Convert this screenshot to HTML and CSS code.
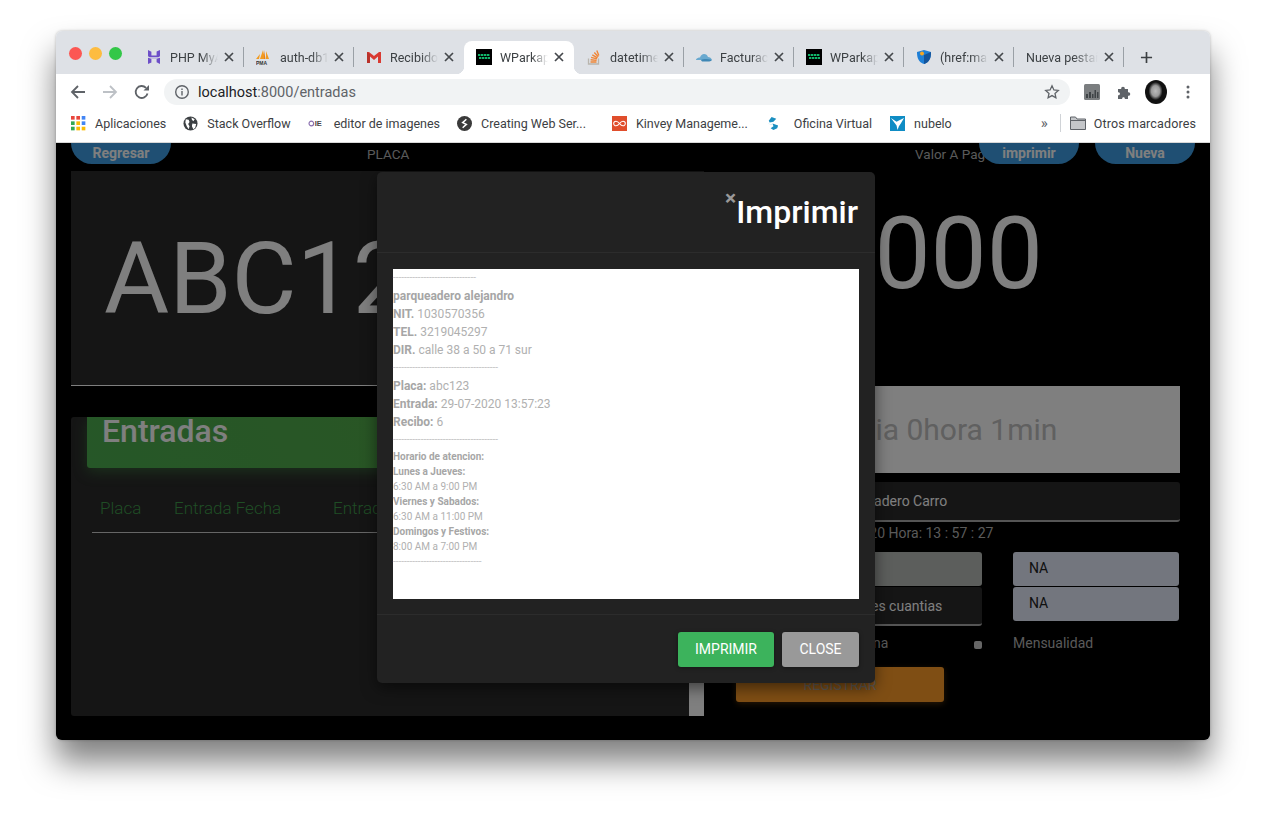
FILE: index.html
```html
<!DOCTYPE html>
<html lang="es">
<head>
<meta charset="utf-8">
<title>WParkap</title>
<link rel="stylesheet" href="styles.css">
</head>
<body>
<div class="window">

  <!-- tab strip -->
  <div class="tabstrip">
    <div class="lights"><i class="light red"></i><i class="light yellow"></i><i class="light green"></i></div>
    <div class="tab sep">
      <svg class="fav" viewBox="0 0 16 16"><path fill="#6d4fc8" d="M2 1l3.400 1.700V6.600h5.200V2.600L14 1v6.200l-1.600 1H3.600L2 7.200zM2 8.800l3.400 1h5.200l3.400-1V15l-3.400-1.700V10H5.400v3.400L2 15z"/></svg>
      <span class="title">PHP MyAdmin</span><svg class="x" viewBox="0 0 10 10"><path d="M1 1l8 8M9 1l-8 8"/></svg>
    </div>
    <div class="tab sep">
      <svg class="fav" viewBox="0 0 16 16"><path fill="#f29a1f" d="M7 1L9 10H4zM10 2l3 8h-3zM4 5L3 10H0z"/><path fill="#e8801a" d="M8 1l1.500 9H8z"/><text x="0" y="15.500" class="pma">PMA</text></svg>
      <span class="title">auth-db143</span><svg class="x" viewBox="0 0 10 10"><path d="M1 1l8 8M9 1l-8 8"/></svg>
    </div>
    <div class="tab">
      <svg class="fav" viewBox="0 0 16 16"><path fill="#d93a32" d="M1 3h2l5 4 5-4h2v11h-3V7.500L8 11 4 7.500V14H1z"/><path fill="#b9322b" d="M1 3l3 2.300V14H1z"/></svg>
      <span class="title">Recibidos</span><svg class="x" viewBox="0 0 10 10"><path d="M1 1l8 8M9 1l-8 8"/></svg>
    </div>
    <div class="tab active">
      <svg class="fav" viewBox="0 0 16 16"><rect width="16" height="16"/><g fill="#12b76a"><rect x="2" y="5" width="2.400" height="2"/><rect x="5" y="5" width="2.400" height="2"/><rect x="8" y="5" width="2.400" height="2"/><rect x="11" y="5" width="2.400" height="2"/><rect x="3" y="8" width="2.400" height="2"/><rect x="6" y="8" width="2.400" height="2"/><rect x="9" y="8" width="2.400" height="2"/><rect x="12" y="8" width="2" height="2"/></g></svg>
      <span class="title">WParkapp</span><svg class="x" viewBox="0 0 10 10"><path d="M1 1l8 8M9 1l-8 8"/></svg>
    </div>
    <div class="tab sep">
      <svg class="fav" viewBox="0 0 16 16"><path fill="none" stroke="#b9b5ae" stroke-width="1.300" d="M2.500 9.500V15h10V9.500"/><path fill="none" stroke="#f08536" stroke-width="1.400" d="M4.500 13h6M4.600 10.800l6 .6M5.100 8.400l5.800 1.500M6.300 5.900l5.200 3M8.300 3.600l4 4.200M10.800 1.500l2 5"/></svg>
      <span class="title">datetime</span><svg class="x" viewBox="0 0 10 10"><path d="M1 1l8 8M9 1l-8 8"/></svg>
    </div>
    <div class="tab sep">
      <svg class="fav" viewBox="0 0 16 16"><path fill="#69a9cf" d="M0 10.500c1-1.500 2.500-2 4-2 .7-2 2.300-3.500 4-3.500 2 0 3.400 1.300 4 3 1.800 0 3.300 1.200 4 3H0z"/><path fill="#3f87b5" d="M5 11c2-1 6-1.500 11 0-1 1-2.500 1.500-4 1.500H7C6 12.500 5.500 12 5 11z"/></svg>
      <span class="title">Facturación</span><svg class="x" viewBox="0 0 10 10"><path d="M1 1l8 8M9 1l-8 8"/></svg>
    </div>
    <div class="tab sep">
      <svg class="fav" viewBox="0 0 16 16"><rect width="16" height="16"/><g fill="#12b76a"><rect x="2" y="5" width="2.400" height="2"/><rect x="5" y="5" width="2.400" height="2"/><rect x="8" y="5" width="2.400" height="2"/><rect x="11" y="5" width="2.400" height="2"/><rect x="3" y="8" width="2.400" height="2"/><rect x="6" y="8" width="2.400" height="2"/><rect x="9" y="8" width="2.400" height="2"/><rect x="12" y="8" width="2" height="2"/></g></svg>
      <span class="title">WParkapp</span><svg class="x" viewBox="0 0 10 10"><path d="M1 1l8 8M9 1l-8 8"/></svg>
    </div>
    <div class="tab sep">
      <svg class="fav" viewBox="0 0 16 16"><path fill="#1f7fd6" d="M8 1l7 2c0 6-1.500 10-7 12C2.500 13 1 9 1 3z"/><path fill="#14549b" d="M8 6l7-3c0 6-1.500 10-7 12z"/><circle cx="6" cy="4.500" r="2" fill="#f5a623"/></svg>
      <span class="title">(href:mailto)</span><svg class="x" viewBox="0 0 10 10"><path d="M1 1l8 8M9 1l-8 8"/></svg>
    </div>
    <div class="tab sep nofav">
      <span class="title">Nueva pestaña</span><svg class="x" viewBox="0 0 10 10"><path d="M1 1l8 8M9 1l-8 8"/></svg>
    </div>
    <svg class="newtab" viewBox="0 0 14 14"><path fill="none" stroke="#3c4043" stroke-width="1.800" d="M7 1v12M1 7h12"/></svg>
  </div>

  <!-- toolbar -->
  <div class="toolbar">
    <svg class="tool" viewBox="0 0 16 16"><path fill="none" stroke="#5f6368" stroke-width="1.800" d="M15 8H2M8 2L2 8l6 6"/></svg>
    <svg class="tool" viewBox="0 0 16 16"><path fill="none" stroke="#bdc1c6" stroke-width="1.800" d="M1 8h13M8 2l6 6-6 6"/></svg>
    <svg class="tool" viewBox="0 0 16 16"><path fill="none" stroke="#5f6368" stroke-width="1.800" d="M13.500 9.500A6 6 0 1 1 12 3.800"/><path fill="#5f6368" d="M9.500 6.500H15V1z"/></svg>
    <div class="omnibox">
      <svg class="info" viewBox="0 0 16 16"><circle cx="8" cy="8" r="6.300" fill="none" stroke="#5f6368" stroke-width="1.400"/><path fill="#5f6368" d="M7.300 7h1.400v4.500H7.300zM7.300 4.500h1.400v1.400H7.300z"/></svg>
      <span class="url">localhost<span class="urlrest">:8000/entradas</span></span>
      <svg class="star" viewBox="0 0 16 16"><path fill="none" stroke="#5f6368" stroke-width="1.300" d="M8 1.800l1.900 4.100 4.400.5-3.300 3 .9 4.400L8 11.600l-3.900 2.200.9-4.400-3.300-3 4.400-.5z"/></svg>
    </div>
    <svg class="ext" viewBox="0 0 16 16"><rect width="16" height="16" rx="1.500" fill="#7b7e80"/><path fill="#3f4346" d="M2 10h2v4H2zM5 8h2v6H5zM8 10h1.500v4H8zM10.500 6H12v8h-1.500zM13 8h1.500v6H13z"/></svg>
    <svg class="puzzle" viewBox="0 0 16 16"><path fill="#5f6368" d="M2 5h3.200c-.5-3 4.100-3 3.600 0H12v3.200c3-.5 3 4.100 0 3.600V15H8.800c.5-2.500-3.100-2.500-2.600 0H2v-3.800c2.600.5 2.600-3.500 0-3z"/></svg>
    <div class="avatar"></div>
    <svg class="dots" viewBox="0 0 4 16"><circle cx="2" cy="3" r="1.500" fill="#5f6368"/><circle cx="2" cy="8" r="1.500" fill="#5f6368"/><circle cx="2" cy="13" r="1.500" fill="#5f6368"/></svg>
  </div>

  <!-- bookmarks -->
  <div class="bookmarks">
    <div class="bm">
      <svg class="bmicon" viewBox="0 0 14 14"><rect width="3.400" height="3.400" fill="#e8453c"/><rect x="5" width="3.400" height="3.400" fill="#e8453c"/><rect x="10" width="3.400" height="3.400" fill="#4285f4"/><rect y="5" width="3.400" height="3.400" fill="#34a853"/><rect x="5" y="5" width="3.400" height="3.400" fill="#fbbc05"/><rect x="10" y="5" width="3.400" height="3.400" fill="#4285f4"/><rect y="10" width="3.400" height="3.400" fill="#34a853"/><rect x="5" y="10" width="3.400" height="3.400" fill="#fbbc05"/><rect x="10" y="10" width="3.400" height="3.400" fill="#fbbc05"/></svg>
      <span>Aplicaciones</span>
    </div>
    <div class="bm">
      <svg class="bmicon" viewBox="0 0 16 16"><circle cx="8" cy="8" r="7.500" fill="#3c4043"/><path fill="#fff" d="M3 3.500l3 .5 1 2.500-1.500 2L7 11l-1 3-2-3-1.500-4zM9 1.500l3.500 2L11 5.500 9.500 4zM10 8l4 .5-1 4-2 1.500-1.500-3z"/></svg>
      <span>Stack Overflow</span>
    </div>
    <div class="bm">
      <svg class="bmicon oie" viewBox="0 0 18 16"><circle cx="3.500" cy="8" r="2.500" fill="none" stroke="#8a6fb0" stroke-width="1.200"/><text x="7" y="11" class="oietext">IE</text></svg>
      <span>editor de imagenes</span>
    </div>
    <div class="bm">
      <svg class="bmicon" viewBox="0 0 16 16"><circle cx="8" cy="8" r="8" fill="#3a3a3a"/><path fill="none" stroke="#fff" stroke-width="1.600" d="M10 3.500L6 7l4 2-4 3.500"/></svg>
      <span>Creating Web Ser...</span>
    </div>
    <div class="bm bm-kinvey">
      <svg class="bmicon" viewBox="0 0 16 16"><rect width="16" height="16" fill="#e04e2c"/><path fill="none" stroke="#fff" stroke-width="1.100" d="M8 8C6.500 6 5.500 5.500 4.300 5.500a2.500 2.500 0 0 0 0 5C5.500 10.500 6.500 10 8 8c1.500-2 2.500-2.500 3.700-2.500a2.500 2.500 0 0 1 0 5C10.500 10.500 9.500 10 8 8z"/></svg>
      <span>Kinvey Manageme...</span>
    </div>
    <div class="bm bm-oficina">
      <svg class="bmicon" viewBox="0 0 16 16"><path fill="#1b8fc0" d="M7 1l5 2-3 3-4 1-1-2zM2 8l6 1-1 0zM8 8l6 2-1 3-4 2-3-2 3-2z"/></svg>
      <span>Oficina Virtual</span>
    </div>
    <div class="bm">
      <svg class="bmicon" viewBox="0 0 16 16"><rect width="16" height="16" fill="#0f8cc4"/><path fill="#fff" d="M1 2l6 4 3-1.500L15 2l-3.500 6-2 3-1.500 4-1-5z"/></svg>
      <span>nubelo</span>
    </div>
    <div class="bmrest">
      <span class="chev">&raquo;</span>
      <i class="bmsep"></i>
      <svg class="folder" viewBox="0 0 16 14"><path fill="#c4c6c9" stroke="#5f6368" stroke-width="1" d="M.5 1h5l1.500 2h8.500v10.500H.5z"/><path fill="none" stroke="#5f6368" d="M.5 4.500h15"/></svg>
      <span class="otros">Otros marcadores</span>
    </div>
  </div>

  <!-- page -->
  <div class="page">
    <div class="topbar">
      <span class="pill">Regresar</span>
      <span class="lbl-placa">PLACA</span>
      <span class="lbl-valor">Valor A Pagar</span>
      <span class="pill pill-imprimir">imprimir</span>
      <span class="pill pill-nueva">Nueva</span>
    </div>
    <div class="columns">
      <div class="col-left">
        <div class="placa-card">ABC123</div>
        <div class="entradas-card">
          <div class="entradas-main">
            <div class="entradas-head">Entradas</div>
            <div class="entradas-cols">
              <span class="c-placa">Placa</span>
              <span class="c-fecha">Entrada Fecha</span>
              <span>Entrada Hora</span>
            </div>
          </div>
          <div class="scrollbar"></div>
        </div>
      </div>
      <div class="col-right">
        <div class="valor">$8000</div>
        <div class="tiempo">1dia 0hora 1min</div>
        <div class="field field-tipo">Parqueadero Carro</div>
        <div class="fecha">Fecha: 29 - 07 - 2020 Hora: 13 : 57 : 27</div>
        <div class="form-grid">
          <div class="form-col">
            <div class="inp inp-grey"></div>
            <div class="field field-short">Menores cuantias</div>
            <div class="check-row"><span class="check-lbl">Tarifa plena</span><i class="check"></i></div>
          </div>
          <div class="form-col form-col-r">
            <div class="inp inp-na">NA</div>
            <div class="inp inp-na">NA</div>
            <div class="check-row mens"><span>Mensualidad</span></div>
          </div>
        </div>
        <div class="registrar">REGISTRAR</div>
      </div>
    </div>

    <div class="overlay"></div>
    <div class="modal">
      <div class="modal-head"><span class="close-x">&times;</span><span class="modal-title">Imprimir</span></div>
      <div class="modal-body">
        <div class="receipt">
          <div class="rl dash">------------------------------</div>
          <div class="rl"><b>parqueadero alejandro</b></div>
          <div class="rl"><b>NIT.</b> 1030570356</div>
          <div class="rl"><b>TEL.</b> 3219045297</div>
          <div class="rl"><b>DIR.</b> calle 38 a 50 a 71 sur</div>
          <div class="rl dash">--------------------------------------</div>
          <div class="rl"><b>Placa:</b> abc123</div>
          <div class="rl"><b>Entrada:</b> 29-07-2020 13:57:23</div>
          <div class="rl"><b>Recibo:</b> 6</div>
          <div class="rl dash">--------------------------------------</div>
          <div class="rs"><b>Horario de atencion:</b></div>
          <div class="rs"><b>Lunes a Jueves:</b></div>
          <div class="rs">6:30 AM a 9:00 PM</div>
          <div class="rs"><b>Viernes y Sabados:</b></div>
          <div class="rs">6:30 AM a 11:00 PM</div>
          <div class="rs"><b>Domingos y Festivos:</b></div>
          <div class="rs">8:00 AM a 7:00 PM</div>
          <div class="rs dash">--------------------------------</div>
        </div>
      </div>
      <div class="modal-foot">
        <span class="mbtn mbtn-green">IMPRIMIR</span>
        <span class="mbtn mbtn-grey">CLOSE</span>
      </div>
    </div>
  </div>
</div>
</body>
</html>
```
FILE: styles.css
```css
* { box-sizing: border-box; }
html, body { height: 820px; }
body {
	margin: 0;
	padding: 31px 0 0 56px;
	background: #fff;
	font-family: Roboto, "Liberation Sans", sans-serif;
	overflow: hidden;
}
.window {
	width: 1154px;
	height: 709px;
	border-radius: 6px;
	overflow: hidden;
	box-shadow: 0 22px 32px rgba(0,0,0,.5), 0 0 3px rgba(0,0,0,.25);
	display: flex;
	flex-direction: column;
}

/* tabs */
.tabstrip {
	height: 43px;
	background: #dee1e6;
	display: flex;
	align-items: flex-end;
	flex: none;
}
.lights {
	width: 78px;
	height: 43px;
	display: flex;
	gap: 7px;
	padding: 16px 0 0 13px;
}
.light { width: 13px; height: 13px; border-radius: 50%; }
.red { background: #fc5753; }
.yellow { background: #fdbc40; }
.green { background: #33c748; }
.tab {
	width: 110px;
	height: 33px;
	display: flex;
	align-items: center;
	padding: 0 0 1px 12px;
	position: relative;
	font-size: 12.5px;
	color: #3c4043;
	flex: none;
}
.tab.sep::after {
	content: "";
	position: absolute;
	right: 0;
	top: 6px;
	width: 1px;
	height: 20px;
	background: #9aa0a6;
}
.tab.active {
	background: #fff;
	border-radius: 8px 8px 0 0;
}
.tab.active::before, .tab.active::after {
	content: "";
	position: absolute;
	bottom: 0;
	width: 8px;
	height: 8px;
}
.tab.active::before { left: -8px; background: radial-gradient(circle at 0 0, transparent 8px, #fff 8.500px); }
.tab.active::after { right: -8px; background: radial-gradient(circle at 100% 0, transparent 8px, #fff 8.500px); }
.fav { width: 16px; height: 16px; flex: none; margin-right: 8px; }
.title {
	width: 48px;
	white-space: nowrap;
	overflow: hidden;
	flex: none;
	-webkit-mask-image: linear-gradient(to right, #000 65%, transparent 100%);
	mask-image: linear-gradient(to right, #000 65%, transparent 100%);
}
.nofav .title { width: 72px; }
.x {
	width: 10px;
	height: 10px;
	margin-left: 6px;
	flex: none;
	fill: none;
	stroke: #45484c;
	stroke-width: 1.700;
}
.pma { font: 700 5px "Liberation Sans", sans-serif; fill: #333; }
.newtab { width: 13px; height: 13px; margin: 0 0 10px 16px; flex: none; }

/* toolbar */
.toolbar {
	height: 34px;
	background: #fff;
	display: flex;
	align-items: center;
	padding: 2px 0 0 14px;
	flex: none;
}
.tool { width: 16px; height: 16px; margin-right: 16px; flex: none; }
.omnibox {
	width: 906px;
	height: 26px;
	margin-left: -2px;
	border-radius: 13px;
	background: #f1f3f4;
	display: flex;
	align-items: center;
	padding: 0 10px;
	flex: none;
}
.info { width: 16px; height: 16px; margin-right: 8px; }
.url { font-size: 14.500px; color: #202124; flex: 1; }
.urlrest { color: #5f6368; }
.star { width: 16px; height: 16px; }
.ext { width: 16px; height: 16px; margin-left: 14px; flex: none; }
.puzzle { width: 16px; height: 16px; margin-left: 16px; flex: none; }
.avatar {
	width: 22px;
	height: 24px;
	margin-left: 13px;
	flex: none;
	border-radius: 50%;
	background: radial-gradient(ellipse 7px 9px at 48% 46%, #bbb 0, #999 60%, #111 100%);
}
.dots { width: 4px; height: 16px; margin-left: 19px; flex: none; }

/* bookmarks */
.bookmarks {
	height: 35px;
	background: #fff;
	border-bottom: 1px solid #d8d8d8;
	display: flex;
	align-items: center;
	padding: 0 0 4px 15px;
	gap: 17px;
	font-size: 12.500px;
	color: #3c4043;
	flex: none;
	white-space: nowrap;
}
.bm { display: flex; align-items: center; gap: 9px; }
.bm-kinvey { margin-left: 9px; }
.bm-oficina { gap: 14px; margin-right: 1px; }
.bmicon { width: 15px; height: 15px; flex: none; }
.oie { width: 17px; }
.oietext { font: 700 8px "Liberation Sans", sans-serif; fill: #444; }
.bmrest { display: flex; align-items: center; margin-left: auto; padding-right: 14px; }
.chev { font-size: 15px; color: #5f6368; width: 10px; }
.bmsep { width: 1px; height: 18px; background: #d0d3d7; margin: 0 9px; }
.folder { width: 16px; height: 14px; margin-right: 8px; }
.otros { letter-spacing: .13px; }

/* page */
.page {
	flex: 1;
	background: #000;
	position: relative;
	overflow: hidden;
	padding: 0 15px;
}
.topbar {
	height: 21px;
	display: flex;
	align-items: center;
	font-size: 13.500px;
	color: #b4b4b4;
	white-space: nowrap;
}
.pill {
	width: 100px;
	height: 21px;
	background: #3e9fe6;
	border-radius: 0 0 22px 22px;
	text-align: center;
	color: #fff;
	font-weight: 700;
	font-size: 14px;
	line-height: 21px;
	flex: none;
	position: relative;
}
.lbl-placa { margin-left: 196px; width: 548px; flex: none; }
.lbl-valor { width: 64px; flex: none; }
.pill-nueva { margin-left: 16px; }
.columns {
	display: grid;
	grid-template-columns: 633px 475px;
	column-gap: 16px;
	margin-top: 7px;
}
.placa-card {
	height: 215px;
	background: #2a2a2a;
	border-bottom: 1px solid #fff;
	color: #fff;
	font-size: 100px;
	font-weight: 400;
	line-height: 100px;
	padding: 58px 0 0 33px;
}
.entradas-card {
	height: 299px;
	margin-top: 31px;
	background: #2a2a2a;
	border-radius: 3px 0 0 3px;
	display: flex;
	overflow: hidden;
}
.entradas-main { flex: 1; padding: 0 0 0 16px; min-width: 0; }
.scrollbar { width: 15px; background: #fff; flex: none; }
.entradas-head {
	height: 51px;
	background: linear-gradient(60deg, #4caf50, #58a845);
	border-radius: 0 0 3px 3px;
	box-shadow: 0 4px 14px rgba(76,175,80,.4);
	color: #fff;
	font-size: 32px;
	font-weight: 500;
	line-height: 29px;
	padding-left: 15px;
}
.entradas-cols {
	margin: 27px 0 0 5px;
	height: 38px;
	border-bottom: 1px solid #ccc;
	display: flex;
	color: #3f9a4a;
	font-size: 17px;
	font-weight: 300;
	padding-left: 8px;
	line-height: 26px;
}
.c-placa { width: 74px; }
.c-fecha { width: 159px; }
.col-right { padding: 0 15px; }
.valor {
	height: 215px;
	margin: 0 -15px;
	padding: 33px 152px 0 0;
	text-align: right;
	color: #fff;
	font-size: 100px;
	font-weight: 400;
	line-height: 100px;
}
.tiempo {
	height: 87px;
	background: #fff;
	color: #c0c0c0;
	font-size: 30px;
	line-height: 87px;
	text-align: center;
	padding-right: 16px;
}
.field {
	height: 40px;
	margin-top: 9px;
	background: #2a2a2a;
	border-bottom: 2px solid #aaa;
	border-radius: 3px;
	color: #fff;
	font-size: 14px;
	line-height: 38px;
}
.field-tipo { padding-left: 95px; }
.fecha {
	height: 30px;
	color: #b4b4b4;
	font-size: 14px;
	line-height: 22px;
	padding-left: 21px;
}
.form-grid { display: grid; grid-template-columns: 247px 166px; column-gap: 31px; }
.inp {
	height: 34px;
	border-radius: 3px;
	font-size: 14px;
	line-height: 33px;
	padding-left: 16px;
}
.inp-grey { background: #b8bcb8; }
.inp-na { background: #e6ecfc; color: #222; margin-bottom: 1px; }
.form-col .field-short { height: 39px; margin-top: 1px; line-height: 39px; padding-left: 96px; white-space: nowrap; }
.check-row {
	height: 41px;
	display: flex;
	justify-content: space-between;
	align-items: center;
	padding-bottom: 8px;
	color: #b4b4b4;
	font-size: 14px;
}
.check-lbl { margin-left: 80px; }
.mens { justify-content: flex-start; margin-top: 5px; }
.check { width: 8px; height: 8px; border-radius: 2px; background: #ccc; margin-top: 4px; }
.registrar {
	width: 208px;
	height: 35px;
	margin-left: 1px;
	border-radius: 3px;
	background: #ff9c28;
	box-shadow: 0 2px 6px rgba(255,156,40,.3);
	color: #bdb3a4;
	font-size: 14px;
	text-align: center;
	line-height: 36px;
}

/* modal */
.overlay {
	position: absolute;
	inset: 0;
	background: rgba(0,0,0,.5);
}
.modal {
	position: absolute;
	left: 321px;
	top: 29px;
	width: 498px;
	height: 511px;
	background: #222;
	border-radius: 5px;
	box-shadow: 0 5px 15px rgba(0,0,0,.5);
	display: flex;
	flex-direction: column;
}
.modal-head {
	height: 81px;
	border-bottom: 1px solid #2c2c2c;
	display: flex;
	justify-content: flex-end;
	padding: 17px 17px 0 0;
	flex: none;
}
.close-x { color: #999; font-size: 21px; font-weight: 700; line-height: 18px; }
.modal-title { color: #fff; font-size: 32px; font-weight: 500; line-height: 46px; }
.modal-body { flex: 1; padding: 16px 16px 15px; }
.receipt {
	height: 330px;
	background: #fff;
	color: #b0b0b0;
	font-size: 12px;
}
.rl { height: 18px; line-height: 18px; }
.rs { height: 15px; line-height: 15px; font-size: 10px; }
.rl b, .rs b { color: #a6a6a6; }
.dash { font-size: 10px; color: #c4c4c4; white-space: nowrap; }
.modal-foot {
	height: 69px;
	border-top: 1px solid #2c2c2c;
	padding: 17px 16px 0 0;
	display: flex;
	justify-content: flex-end;
	gap: 8px;
	flex: none;
}
.mbtn {
	height: 35px;
	border-radius: 3px;
	color: #fff;
	font-size: 14px;
	line-height: 35px;
	text-align: center;
	box-shadow: 0 1px 4px rgba(0,0,0,.4);
}
.mbtn-green { width: 96px; background: #3cb35c; }
.mbtn-grey { width: 77px; background: #999; }
```
